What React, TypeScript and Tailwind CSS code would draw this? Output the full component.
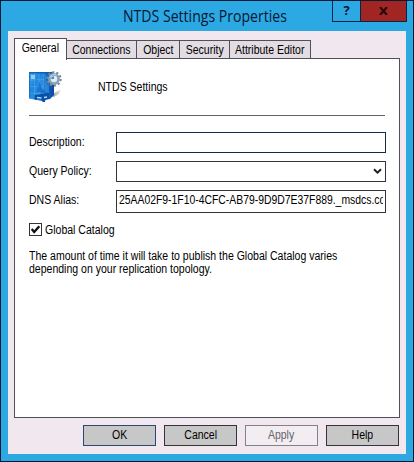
import React from "react";

const tabs = [
  { label: "Connections", box: "w-[70px]" },
  { label: "Object", box: "w-[43px]" },
  { label: "Security", box: "w-[50px]" },
  { label: "Attribute Editor", box: "w-[81px]" },
];

function Label({ children }: { children: React.ReactNode }) {
  return <span className="inline-block origin-left scale-x-[.877] whitespace-nowrap">{children}</span>;
}

// Centred variant used on tabs and push buttons.
function Caption({ children }: { children: React.ReactNode }) {
  return <span className="inline-block scale-x-[.875] whitespace-nowrap">{children}</span>;
}

function ServerIcon() {
  return (
    <svg width="34" height="34" viewBox="0 0 34 34" className="block shrink-0">
      <defs>
        <linearGradient id="front" x1="0" y1="0" x2="1" y2="1">
          <stop offset="0" stopColor="#4db4f0" />
          <stop offset="0.35" stopColor="#2186dc" />
          <stop offset="0.7" stopColor="#2c8fe2" />
          <stop offset="1" stopColor="#0d58b4" />
        </linearGradient>
        <linearGradient id="side" x1="0" y1="0" x2="1" y2="0">
          <stop offset="0" stopColor="#1b74cf" />
          <stop offset="1" stopColor="#0a469c" />
        </linearGradient>
        <linearGradient id="shade" x1="0" y1="0" x2="1" y2="0">
          <stop offset="0" stopColor="#8a8a8a" />
          <stop offset="1" stopColor="#dddddd" />
        </linearGradient>
      </defs>
      <path d="M23 24 32 19.5 30 24 24 27.5Z" fill="url(#shade)" opacity=".8" />
      <path d="M0 2.5 11 2 16 2 16 31 13 31 0 28.5Z" fill="url(#front)" />
      <path d="M15 2 25 2.5 25 25 21 29 15 30Z" fill="url(#side)" />
      <path d="M0 2.8H25" stroke="#0b5cae" strokeWidth="1.4" />
      <path d="M.6 3V28" stroke="#1a6cc0" strokeWidth="1" />
      <path d="M1 10 15 9.5M1 16.5 15 17M1 23 15 24.5M5.5 3V28M10 3V27M15 3V27M19.5 12V27" fill="none" stroke="#7ccaf8" strokeWidth=".6" opacity=".45" />
      <path d="M2 5h4v4H2z" fill="#a9e2fa" opacity=".75" />
      <path d="M8 20 10.5 12 13.5 20 19 21 19 23 8 22Z" fill="#0f61bd" opacity=".6" />
      <path d="M16 5v17l3 1V15l-2-3V5Z" fill="#3fa2ee" opacity=".5" />
      <path d="M5.5 25 20 23 20 29 16.5 29.5 16 32 13.5 32 13 29.5 8 29 7.5 30 5.5 29.5Z" fill="#0b50a8" />
      <path d="M8 27.5 12.5 28M15 27.5 18 27" stroke="#a6dcff" strokeWidth="1.3" />
      <circle cx="25" cy="9" r="6.6" fill="none" stroke="#73889b" strokeWidth="2.2" strokeDasharray="2.2 1.948" />
      <circle cx="25" cy="9" r="4.6" fill="#d9edfb" stroke="#8b9fb1" strokeWidth="2.6" />
      <path d="M22.2 9A2.8 2.8 0 0 1 25 6.2L25 9Z" fill="#3d90d8" />
      <path d="M20.7 7.5A4.6 4.6 0 0 1 27.5 5.2" fill="none" stroke="#cbd6de" strokeWidth="1" />
    </svg>
  );
}

export default function App() {
  return (
    <div className="flex h-[462px] w-[414px] flex-col overflow-hidden border border-[#071a35] bg-[#2ca8e2] px-[7px] font-['Liberation_Sans',Arial,sans-serif] text-[12px] leading-[13px] text-black">
      <header className="-mr-[3px] flex h-[30px] shrink-0 items-start justify-between">
        <h1 className="ml-[115px] mt-[5px] w-[200px] origin-left scale-x-[.908] whitespace-nowrap font-['Open_Sans','Noto_Sans',sans-serif] text-[15.5px] leading-[20px] text-[#071735]">
          NTDS Settings Properties
        </h1>
        <div className="mr-[2px] flex h-[21px] w-[75px] shrink-0 border border-t-0 border-[#092445]">
          <button className="flex w-[28px] items-center justify-center border-r border-[#092445] pb-px font-['Open_Sans',sans-serif] text-[13px] font-bold text-[#071735]">?</button>
          <button className="flex flex-1 items-center justify-center bg-[#a12522]">
            <svg width="9" height="8" viewBox="0 0 9 8"><path d="M1 0 8 8M8 0 1 8" stroke="#21070b" strokeWidth="2" /></svg>
          </button>
        </div>
      </header>

      <main className="flex h-[423px] w-[398px] shrink-0 flex-col bg-[#f0e7ef] pl-[6px] pt-[7px]">
        <nav className="relative z-10 flex h-[20px] items-end">
          <button className="-mb-[2px] flex h-[22px] w-[53px] shrink-0 justify-center border border-b-0 border-[#50505a] bg-white pt-[3px]">
            <Caption>General</Caption>
          </button>
          {tabs.map((tab) => (
            <button key={tab.label} className={`-mb-px flex h-[19px] shrink-0 items-center justify-center border border-l-0 border-[#50505a] bg-[#e3dce2] pt-px ${tab.box}`}>
              <Caption>{tab.label}</Caption>
            </button>
          ))}
        </nav>

        <section className="h-[360px] w-[386px] shrink-0 border border-[#50505a] bg-white px-[14px] pt-[11px]">
          <div className="flex h-[46px] border-b border-[#626268]">
            <ServerIcon />
            <h2 className="ml-[35px] mt-[11px]"><Label>NTDS Settings</Label></h2>
          </div>

          <div className="mt-[16px] flex h-[21px]">
            <label htmlFor="description" className="w-[87px] shrink-0 pt-[4px]"><Label>Description:</Label></label>
            <input id="description" className="h-[21px] w-[270px] shrink-0 border border-[#172c42] bg-white outline-none" />
          </div>
          <div className="mt-[8px] flex h-[21px]">
            <span className="w-[87px] shrink-0 pt-[4px]"><Label>Query Policy:</Label></span>
            <button aria-label="Query policy" className="flex h-[21px] w-[270px] shrink-0 items-center justify-end border border-[#33333a] bg-white pr-[3px]">
              <svg width="9" height="7" viewBox="0 0 9 7"><path d="M1 1.2 4.5 4.7 8 1.2" fill="none" stroke="#222" strokeWidth="2" /></svg>
            </button>
          </div>
          <div className="mt-[8px] flex h-[23px]">
            <span className="w-[87px] shrink-0 pt-[4px]"><Label>DNS Alias:</Label></span>
            <div className="h-[23px] w-[270px] shrink-0 border border-[#33333a] bg-white px-[2px] pt-[3px]">
              <div className="w-[264px] overflow-hidden whitespace-nowrap">
                <span className="inline-block origin-left scale-x-[.866]">25AA02F9-1F10-4CFC-AB79-9D9D7E37F889._msdcs.co</span>
              </div>
            </div>
          </div>

          <div className="mt-[10px] flex h-[13px]">
            <span className="flex size-[13px] shrink-0 items-center justify-center border border-[#33333a]">
              <svg width="11" height="11" viewBox="0 0 11 11"><path d="M1.7 5 4.2 8 9.3 2.3" fill="none" stroke="#111" strokeWidth="2.4" /></svg>
            </span>
            <span className="ml-[3px] mt-px"><Label>Global Catalog</Label></span>
          </div>

          <p className="mt-[14px] whitespace-nowrap">
            <Label>The amount of time it will take to publish the Global Catalog varies<br />depending on your replication topology.</Label>
          </p>
        </section>

        <footer className="mt-[7px] flex gap-[8px] pl-[69px]">
          <button className="h-[21px] w-[73px] shrink-0 border border-[#294875] bg-[#c8c7c8]"><Caption>OK</Caption></button>
          <button className="h-[21px] w-[73px] shrink-0 border border-[#333338] bg-[#c8c7c8]"><Caption>Cancel</Caption></button>
          <button disabled className="h-[21px] w-[73px] shrink-0 border border-[#85808a] bg-[#f1edf1] text-[#66636a]"><Caption>Apply</Caption></button>
          <button className="h-[21px] w-[73px] shrink-0 border border-[#333338] bg-[#c8c7c8]"><Caption>Help</Caption></button>
        </footer>
      </main>
    </div>
  );
}
